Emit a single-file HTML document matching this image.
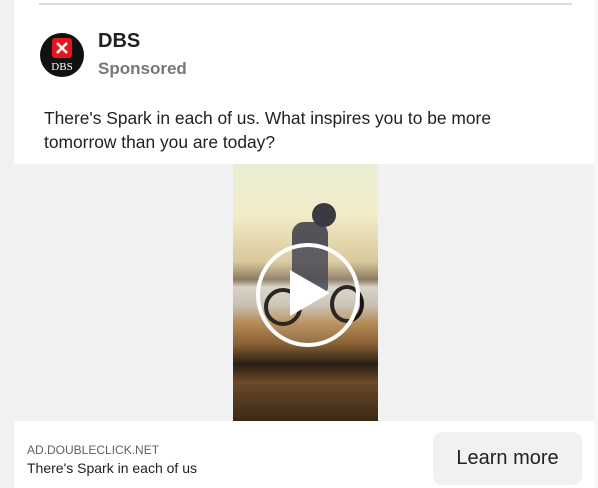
<!DOCTYPE html>
<html><head><style>
body{margin:0;width:598px;height:488px;overflow:hidden;background:#fff;font-family:"Liberation Sans",Roboto,sans-serif;position:relative}
.abs{position:absolute}
</style></head><body>
<div class="abs" style="left:0;top:0;width:14px;height:488px;background:#f1f1f1"></div>
<div class="abs" style="left:594px;top:0;width:4px;height:488px;background:#f7f7f7"></div>
<div class="abs" style="left:39px;top:3px;width:533px;height:2px;background:#dcdcdc"></div>
<div class="abs" style="left:40px;top:33px;width:44px;height:44px;border-radius:50%;background:#111"></div>
<div class="abs" style="left:52px;top:38px;width:20px;height:20px;background:#e8141e;border-radius:3px"></div>
<svg class="abs" style="left:52px;top:38px" width="20" height="20"><path d="M5 5L15 15M15 5L5 15" stroke="#fff" stroke-width="2.5"/></svg>
<div class="abs" style="left:40px;top:61px;width:44px;text-align:center;color:#fff;font-family:'Liberation Serif',serif;font-size:11px">DBS</div>
<div class="abs" style="left:98px;top:30px;font-size:20px;font-weight:bold;color:#202124">DBS</div>
<div class="abs" style="left:98px;top:59px;font-size:17px;font-weight:bold;color:#777">Sponsored</div>
<div class="abs" style="left:44px;top:106px;font-size:17.4px;line-height:24px;color:#202124">There's Spark in each of us. What inspires you to be more<br>tomorrow than you are today?</div>
<div class="abs" style="left:14px;top:164px;width:580px;height:257px;background:#f1f1f1"></div>
<div class="abs" style="left:233px;top:164px;width:145px;height:257px;background:linear-gradient(180deg,#e9ecd6 0%,#f2ecc8 20%,#d9c89a 38%,#8c7a62 45%,#d8d4c8 48%,#c9c0b2 55%,#b58a55 62%,#8a6235 70%,#2a1e12 78%,#6b4a2a 85%,#3a2814 100%)"></div>
<div class="abs" style="left:312px;top:203px;width:24px;height:24px;background:#3a3a40;border-radius:50%"></div>
<div class="abs" style="left:292px;top:222px;width:36px;height:70px;background:#3a3a48;border-radius:12px 12px 4px 4px;opacity:.85"></div>
<div class="abs" style="left:264px;top:288px;width:30px;height:30px;border:4px solid #1a1410;border-radius:50%"></div>
<div class="abs" style="left:330px;top:285px;width:26px;height:30px;border:4px solid #1a1410;border-radius:50%"></div>
<div class="abs" style="left:256px;top:243px;width:96px;height:96px;border:4px solid #fff;border-radius:50%;background:rgba(255,255,255,.08)"></div>
<svg class="abs" style="left:286px;top:270px" width="50" height="50"><path d="M4 0L44 23L4 46Z" fill="#fff"/></svg>
<div class="abs" style="left:27px;top:443px;font-size:12px;color:#5f6368">AD.DOUBLECLICK.NET</div>
<div class="abs" style="left:27px;top:460px;font-size:14px;color:#202124">There's Spark in each of us</div>
<div class="abs" style="left:433px;top:432px;width:149px;height:53px;background:#f1f1f1;border-radius:9px;font-size:20px;color:#202124;text-align:center;line-height:53px">Learn more</div>
</body></html>
